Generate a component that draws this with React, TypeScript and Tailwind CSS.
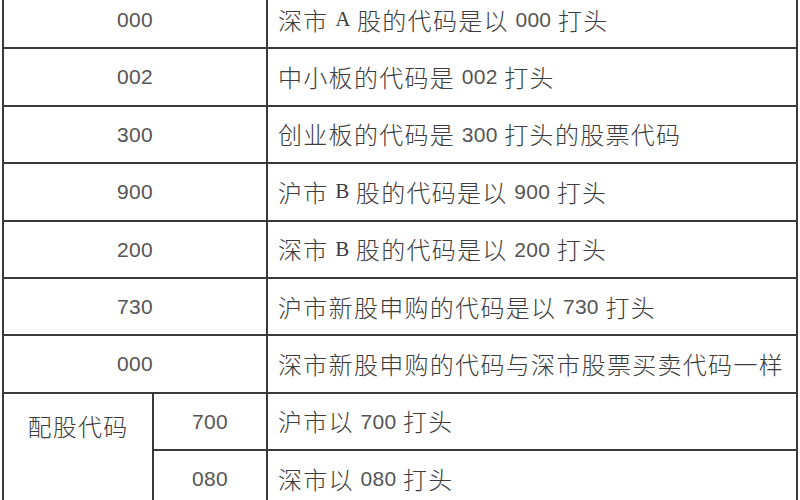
import { Fragment } from "react";

const rows = [
  { code: "000", text: ["深市 ", "A", " 股的代码是以 ", "000", " 打头"] },
  { code: "002", text: ["中小板的代码是 ", "002", " 打头"] },
  { code: "300", text: ["创业板的代码是 ", "300", " 打头的股票代码"] },
  { code: "900", text: ["沪市 ", "B", " 股的代码是以 ", "900", " 打头"] },
  { code: "200", text: ["深市 ", "B", " 股的代码是以 ", "200", " 打头"] },
  { code: "730", text: ["沪市新股申购的代码是以 ", "730", " 打头"] },
  { code: "000", text: ["深市新股申购的代码与深市股票买卖代码一样"] },
];

const sub = [
  { code: "700", text: ["沪市以 ", "700", " 打头"] },
  { code: "080", text: ["深市以 ", "080", " 打头"] },
];

// 文字の種類ごとにフォントを切り替える
const Piece = ({ s }: { s: string }) => {
  if (/^\d+$/.test(s)) {
    return <span className="font-['Liberation_Sans',sans-serif] text-[21px] tracking-[0.3px] text-[#555]">{s}</span>;
  }
  if (/^[AB]$/.test(s)) {
    return <span className="font-['Liberation_Serif',serif] text-[21px] tracking-normal">{s}</span>;
  }
  return <>{s}</>;
};

const Desc = ({ parts }: { parts: string[] }) => (
  <div className="bg-white flex items-center pl-[10px] whitespace-pre text-[24px] tracking-[1.3px] text-[#3c3c3c] font-['Noto_Sans_CJK_SC',sans-serif] font-light">
    {parts.map((p, i) => (
      <Piece key={i} s={p} />
    ))}
  </div>
);

const Code = ({ v, span }: { v: string; span?: boolean }) => (
  <div
    className={`bg-white flex items-center justify-center text-[21px] tracking-[0.3px] text-[#555] font-['Liberation_Sans',sans-serif] ${
      span ? "col-span-2" : ""
    }`}
  >
    {v}
  </div>
);

export default function App() {
  return (
    <div className="w-[800px] h-[500px] bg-white overflow-hidden">
      <div className="ml-[2px] mt-[-10px] w-[796px] bg-[#3a3a3a] p-[2px] grid grid-cols-[148px_112px_528px] auto-rows-[55.4px] gap-[2px]">
        {rows.map((r, i) => (
          <Fragment key={i}>
            <Code v={r.code} span />
            <Desc parts={r.text} />
          </Fragment>
        ))}
        <div className="row-span-2 bg-white flex justify-center pt-[14px] text-[24px] tracking-[1.3px] text-[#3c3c3c] font-['Noto_Sans_CJK_SC',sans-serif] font-light">
          配股代码
        </div>
        {sub.map((r, i) => (
          <Fragment key={`s${i}`}>
            <Code v={r.code} />
            <Desc parts={r.text} />
          </Fragment>
        ))}
      </div>
    </div>
  );
}
